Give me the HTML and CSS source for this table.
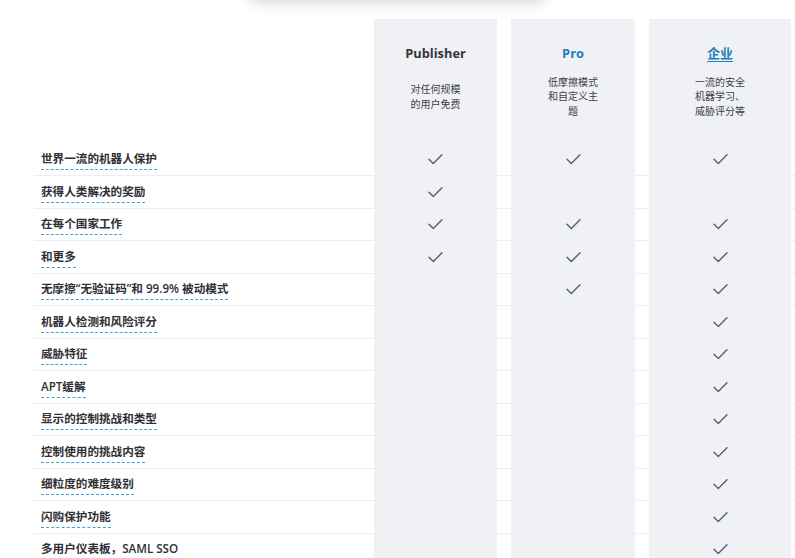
FILE: index.html
```html
<!DOCTYPE html>
<html lang="zh">
<head>
<meta charset="utf-8">
<link rel="stylesheet" href="styles.css">
</head>
<body>
<div class="page">
  <div class="promo-card"></div>
  <div class="compare">
    <div class="row head">
      <div class="label"></div>
      <div class="plan pub"><div class="plan-name">Publisher</div><div class="plan-desc">对任何规模<br>的用户免费</div></div>
      <div class="plan pro"><div class="plan-name blue">Pro</div><div class="plan-desc">低摩擦模式<br>和自定义主<br>题</div></div>
      <div class="plan ent"><div class="plan-name blue link">企业</div><div class="plan-desc">一流的安全<br>机器学习、<br>威胁评分等</div></div>
    </div>
    <div class="row"><div class="label"><span>世界一流的机器人保护</span></div><div class="plan pub"><i class="ck"></i></div><div class="plan pro"><i class="ck"></i></div><div class="plan ent"><i class="ck"></i></div></div>
    <div class="row"><div class="label"><span>获得人类解决的奖励</span></div><div class="plan pub"><i class="ck"></i></div><div class="plan pro"></div><div class="plan ent"></div></div>
    <div class="row"><div class="label"><span>在每个国家工作</span></div><div class="plan pub"><i class="ck"></i></div><div class="plan pro"><i class="ck"></i></div><div class="plan ent"><i class="ck"></i></div></div>
    <div class="row"><div class="label"><span>和更多</span></div><div class="plan pub"><i class="ck"></i></div><div class="plan pro"><i class="ck"></i></div><div class="plan ent"><i class="ck"></i></div></div>
    <div class="row"><div class="label"><span>无摩擦“无验证码”和 99.9% 被动模式</span></div><div class="plan pub"></div><div class="plan pro"><i class="ck"></i></div><div class="plan ent"><i class="ck"></i></div></div>
    <div class="row"><div class="label"><span>机器人检测和风险评分</span></div><div class="plan pub"></div><div class="plan pro"></div><div class="plan ent"><i class="ck"></i></div></div>
    <div class="row"><div class="label"><span>威胁特征</span></div><div class="plan pub"></div><div class="plan pro"></div><div class="plan ent"><i class="ck"></i></div></div>
    <div class="row"><div class="label"><span>APT缓解</span></div><div class="plan pub"></div><div class="plan pro"></div><div class="plan ent"><i class="ck"></i></div></div>
    <div class="row"><div class="label"><span>显示的控制挑战和类型</span></div><div class="plan pub"></div><div class="plan pro"></div><div class="plan ent"><i class="ck"></i></div></div>
    <div class="row"><div class="label"><span>控制使用的挑战内容</span></div><div class="plan pub"></div><div class="plan pro"></div><div class="plan ent"><i class="ck"></i></div></div>
    <div class="row"><div class="label"><span>细粒度的难度级别</span></div><div class="plan pub"></div><div class="plan pro"></div><div class="plan ent"><i class="ck"></i></div></div>
    <div class="row"><div class="label"><span>闪购保护功能</span></div><div class="plan pub"></div><div class="plan pro"></div><div class="plan ent"><i class="ck"></i></div></div>
    <div class="row"><div class="label"><span>多用户仪表板，SAML SSO</span></div><div class="plan pub"></div><div class="plan pro"></div><div class="plan ent"><i class="ck"></i></div></div>
  </div>
</div>
</body>
</html>
```
FILE: styles.css
```css
html, body {
  margin: 0;
  padding: 0;
  background: #ffffff;
  overflow: hidden;
}
body {
  font-family: "Open Sans", "Noto Sans CJK SC", sans-serif;
  color: #2f3237;
}
.page {
  width: 795px;
  height: 558px;
  overflow: hidden;
}
.promo-card {
  margin: -30px 0 0 250px;
  width: 296px;
  height: 30px;
  background: #fff;
  border-radius: 8px;
  box-shadow: 0 3px 14px rgba(0, 0, 0, 0.16);
}
.compare {
  margin: 18.5px 0 0 34px;
  width: 761px;
}
.row {
  display: grid;
  grid-template-columns: 340px 123px 14px 124px 14px 142px 1fr;
  height: 31.5px;
  border-bottom: 1px solid #eceef2;
  align-items: stretch;
}
.row.head {
  height: 125px;
  border-bottom: none;
}
.label {
  grid-column: 1;
  display: flex;
  align-items: center;
  padding-left: 7px;
  font-size: 11.6px;
  font-weight: 600;
  color: #2e3035;
}
.label span {
  border-bottom: 1px dashed #3aa3dc;
  line-height: 16px;
  padding-bottom: 2px;
  margin-top: 3px;
}
.plan {
  background: #f0f1f5;
  box-shadow: 0 1px 0 #f0f1f5;
  display: flex;
  align-items: center;
  justify-content: center;
}
.pub { grid-column: 2; }
.pro { grid-column: 4; }
.ent { grid-column: 6; }
.head .plan {
  flex-direction: column;
  justify-content: flex-start;
  box-shadow: none;
}
.plan-name {
  margin-top: 24px;
  height: 20px;
  line-height: 20px;
  font-size: 12.8px;
  font-weight: 700;
  color: #33363b;
}
.plan-name.blue { color: #1b7db9; }
.plan-name.link { text-decoration: underline; text-underline-offset: 3px; text-decoration-thickness: 1px; }
.plan-desc {
  height: 56px;
  margin-top: 6px;
  display: flex;
  align-items: center;
  text-align: center;
  font-size: 10px;
  line-height: 14.5px;
  color: #3d4047;
}
.ck {
  display: block;
  width: 15px;
  height: 11px;
  margin-top: 1px;
  background: url("data:image/svg+xml;utf8,<svg xmlns='http://www.w3.org/2000/svg' viewBox='0 0 15 11'><path d='M1 5.2 L5.3 9.6 L14 0.8' fill='none' stroke='%23566070' stroke-width='1.4' stroke-linecap='round' stroke-linejoin='round'/></svg>") no-repeat center / contain;
}
```
